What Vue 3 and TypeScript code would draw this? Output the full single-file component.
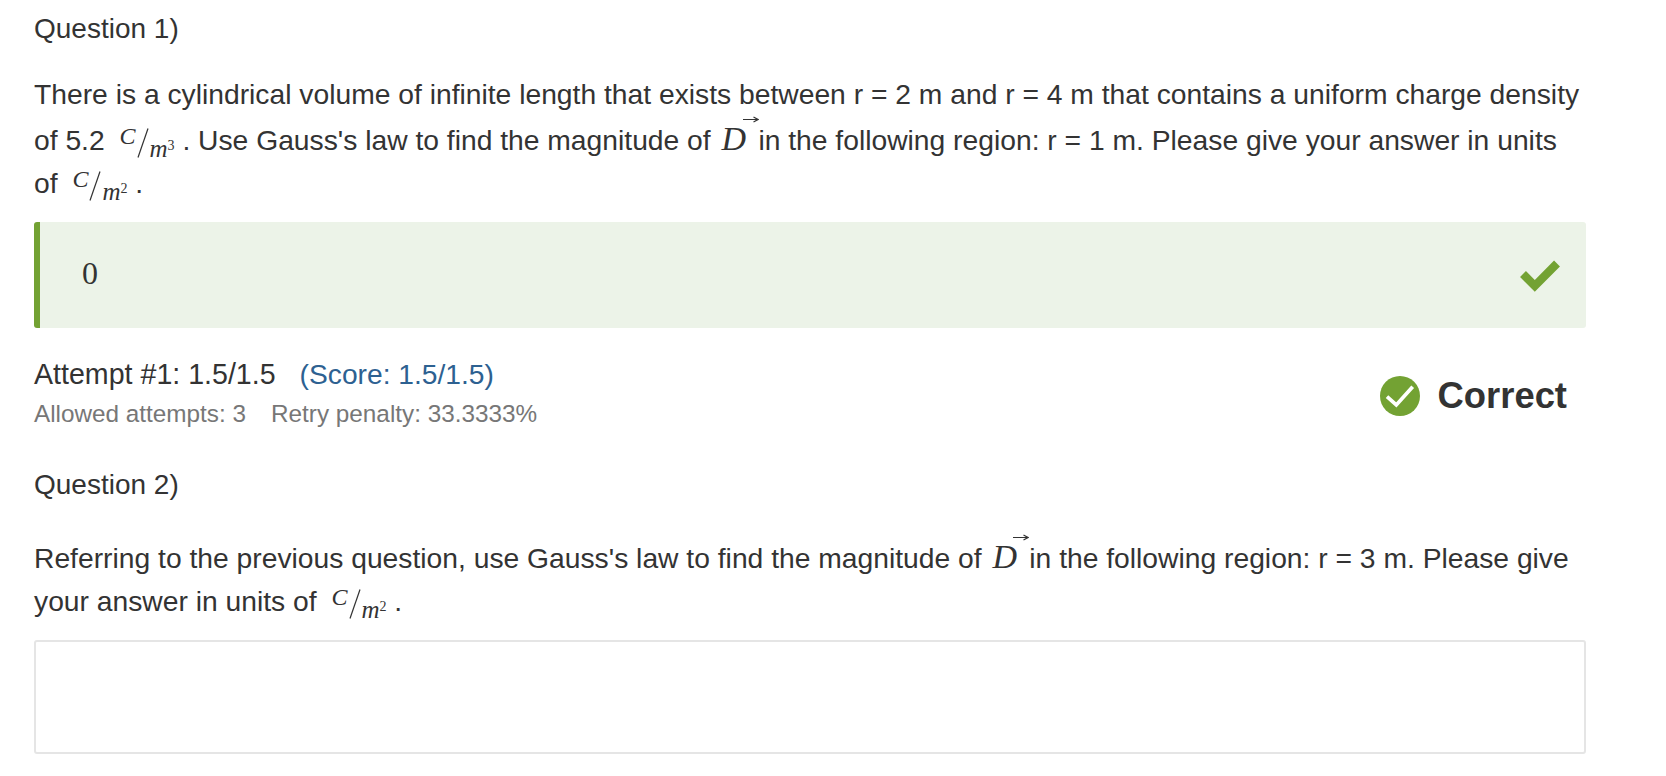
<script setup lang="ts">
const slashPath = 'M11 0.5 1 29.5'
const arrowPath = 'M0 3.5h14M10.5 1l4.5 2.5-4.5 2.5'
</script>

<template>
  <main class="page">
    <section class="question first">
      <h2 class="title">Question 1)</h2>
      <p class="prompt">
        There is a cylindrical volume of infinite length that exists between r = 2 m and r = 4 m that contains a uniform charge density of 5.2
        <span class="frac"><i class="num">C</i><svg class="slash" viewBox="0 0 12 30"><path :d="slashPath" /></svg><i class="den">m<sup>3</sup></i></span>
        . Use Gauss's law to find the magnitude of
        <span class="vec"><i>D</i><svg class="arrow" viewBox="0 0 16 7"><path :d="arrowPath" /></svg></span>
        in the following region: r = 1 m. Please give your answer in units of
        <span class="frac"><i class="num">C</i><svg class="slash" viewBox="0 0 12 30"><path :d="slashPath" /></svg><i class="den">m<sup>2</sup></i></span>
        .
      </p>
      <div class="answer correct">
        <span class="value">0</span>
        <svg class="tick" viewBox="0 0 40 32"><path d="M3 14 14.8 25.9 37 3.5" /></svg>
      </div>
      <div class="result">
        <div>
          <div class="attempt">Attempt #1: 1.5/1.5<span class="score">(Score: 1.5/1.5)</span></div>
          <div class="meta"><span>Allowed attempts: 3</span><span>Retry penalty: 33.3333%</span></div>
        </div>
        <div class="status">
          <svg class="badge" viewBox="0 0 40 40"><circle cx="20" cy="20" r="20" /><path d="M7 20.7 16.3 29 32.7 10.7" /></svg>
          <strong>Correct</strong>
        </div>
      </div>
    </section>
    <section class="question">
      <h2 class="title">Question 2)</h2>
      <p class="prompt">
        Referring to the previous question, use Gauss's law to find the magnitude of
        <span class="vec"><i>D</i><svg class="arrow" viewBox="0 0 16 7"><path :d="arrowPath" /></svg></span>
        in the following region: r = 3 m. Please give your answer in units of
        <span class="frac"><i class="num">C</i><svg class="slash" viewBox="0 0 12 30"><path :d="slashPath" /></svg><i class="den">m<sup>2</sup></i></span>
        .
      </p>
      <div class="answer empty"></div>
    </section>
  </main>
</template>

<style>
html, body { background: #fff; }
</style>

<style scoped>
.page {
  width: 1552px;
  padding: 9px 0 0 34px;
  color: #333;
  font-family: "Liberation Sans", Arial, sans-serif;
  font-size: 28.25px;
}
.title {
  margin: 0;
  font-size: 28px;
  font-weight: 400;
  line-height: 40px;
}
.prompt {
  margin: 23.5px 0 0;
  line-height: 43px;
}
.frac {
  display: inline-block;
  position: relative;
  width: 55px;
  height: 30px;
  margin-left: 7px;
  vertical-align: -8px;
  font-family: "Liberation Serif", serif;
  line-height: 1;
}
.num {
  position: absolute;
  left: 0;
  top: -4px;
  font-size: 24px;
}
.den {
  position: absolute;
  left: 30px;
  top: 8px;
  font-size: 25px;
}
.den sup {
  font-size: 14px;
  font-style: normal;
  vertical-align: 7px;
  line-height: 0;
}
.slash {
  position: absolute;
  left: 17px;
  top: 0;
  width: 12px;
  height: 30px;
  fill: none;
  stroke: #333;
  stroke-width: 1.2;
}
.vec {
  position: relative;
  display: inline-block;
  width: 29px;
  margin-left: 3px;
  padding-top: 6px;
  font-family: "Liberation Serif", serif;
  font-size: 34px;
  line-height: 1;
}
.arrow {
  position: absolute;
  left: 21px;
  top: 0;
  width: 16px;
  height: 7px;
  fill: none;
  stroke: #333;
  stroke-width: 1.2;
}
.answer {
  box-sizing: border-box;
  margin-top: 17px;
  border-radius: 3px;
}
.correct {
  display: flex;
  align-items: center;
  justify-content: space-between;
  height: 106px;
  padding: 0 26px 0 42px;
  background: #ecf3e8;
  border-left: 6px solid #73a233;
}
.value {
  margin-bottom: 3px;
  font-family: "Liberation Serif", serif;
  font-size: 32px;
}
.tick {
  width: 40px;
  height: 32px;
  margin-top: 2px;
  fill: none;
  stroke: #73a233;
  stroke-width: 8.3;
}
.result {
  display: flex;
  justify-content: space-between;
  align-items: center;
  margin-top: 26px;
}
.attempt {
  font-size: 28.6px;
  line-height: 41px;
}
.score {
  margin-left: 24px;
  color: #2d6191;
  font-size: 28.2px;
}
.meta {
  display: flex;
  gap: 25px;
  color: #777;
  font-size: 24.3px;
  line-height: 38px;
}
.status {
  display: flex;
  align-items: center;
  gap: 18px;
  margin: 6px 19px 0 0;
  font-size: 36.4px;
}
.badge {
  width: 40px;
  height: 40px;
}
.badge circle {
  fill: #73a233;
}
.badge path {
  fill: none;
  stroke: #fff;
  stroke-width: 3.7;
}
.question + .question {
  margin-top: 32px;
}
.question + .question .prompt {
  margin-top: 29px;
}
.empty {
  height: 114px;
  margin-top: 17px;
  border: 2px solid #e5e5e5;
}
</style>
